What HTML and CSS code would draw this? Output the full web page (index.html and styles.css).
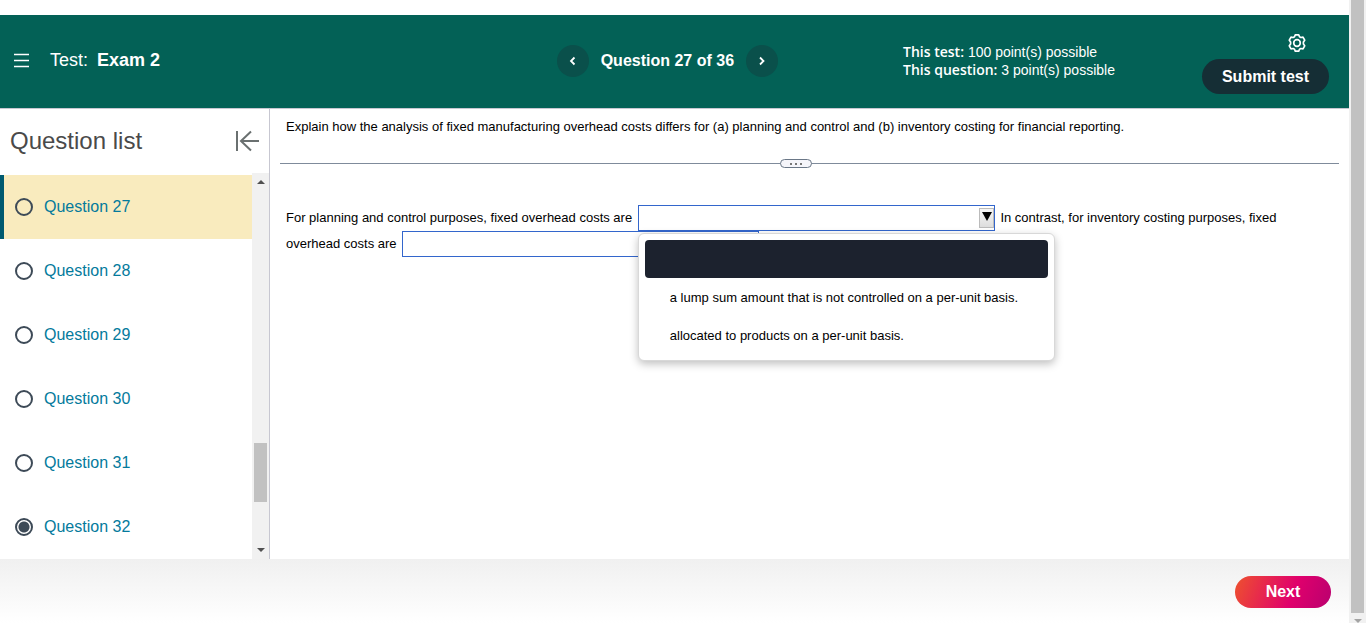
FILE: index.html
```html
<!DOCTYPE html>
<html lang="en">

<head>
    <meta charset="UTF-8">
    <meta name="viewport" content="width=device-width, initial-scale=1.0">
    <title>Exam 2</title>
    <link rel="stylesheet" href="styles.css">
</head>

<body>
    <div class="page">
        <header class="header">
            <div class="header-left">
                <button type="button" class="icon-btn" aria-label="Menu">
                    <svg width="16" height="16" viewBox="0 0 16 16" stroke="#fff" stroke-width="1.6">
                        <path d="M0 1.500h15M0 7.500h15M0 13.500h15" />
                    </svg>
                </button>
                <h1 class="test-name"><span>Test:</span> Exam 2</h1>
            </div>
            <nav class="question-nav">
                <button type="button" class="round-btn" aria-label="Previous question">
                    <svg width="8" height="10" viewBox="0 0 8 10" fill="none" stroke="#fff" stroke-width="1.8">
                        <path d="M5.5 1.5L2 5l3.500 3.500" />
                    </svg>
                </button>
                <h2>Question 27 of 36</h2>
                <button type="button" class="round-btn" aria-label="Next question">
                    <svg width="8" height="10" viewBox="0 0 8 10" fill="none" stroke="#fff" stroke-width="1.8">
                        <path d="M2 1.500L5.500 5 2 8.500" />
                    </svg>
                </button>
            </nav>
            <div class="header-right">
                <div class="points">
                    <p><b>This test:</b> 100 point(s) possible</p>
                    <p><b>This question:</b> 3 point(s) possible</p>
                </div>
                <div class="actions">
                    <button type="button" class="icon-btn settings" aria-label="Settings">
                        <svg width="20" height="20" viewBox="0 0 20 20" fill="none" stroke="#fff" stroke-width="1.7" stroke-linejoin="round">
                            <path d="M8.300 1.800h3.400l.8 2 1.300.7 2.200-.3 1.700 3-1.300 1.700v2.200l1.300 1.700-1.700 3-2.200-.3-1.300.7-.8 2H8.300l-.8-2-1.300-.7-2.200.3-1.700-3 1.300-1.700V8.900L2.300 7.200l1.700-3 2.200.3 1.300-.7z" />
                            <circle cx="10" cy="10" r="3.300" />
                        </svg>
                    </button>
                    <button type="button" class="submit">Submit test</button>
                </div>
            </div>
        </header>

        <div class="content">
            <aside class="sidebar">
                <div class="sidebar-title">
                    <h2>Question list</h2>
                    <button type="button" class="icon-btn" aria-label="Collapse list">
                        <svg width="24" height="22" viewBox="0 0 24 22" fill="none" stroke="#6a7070" stroke-width="2">
                            <path d="M2 1v20M24 11H6M16 1.500L6 11l10 9.500" />
                        </svg>
                    </button>
                </div>
                <div class="list-wrap">
                    <ul class="list">
                        <li class="current"><input type="radio" name="q27" id="q27"><label for="q27">Question 27</label></li>
                        <li><input type="radio" name="q28" id="q28"><label for="q28">Question 28</label></li>
                        <li><input type="radio" name="q29" id="q29"><label for="q29">Question 29</label></li>
                        <li><input type="radio" name="q30" id="q30"><label for="q30">Question 30</label></li>
                        <li><input type="radio" name="q31" id="q31"><label for="q31">Question 31</label></li>
                        <li><input type="radio" name="q32" id="q32" checked><label for="q32">Question 32</label></li>
                    </ul>
                    <div class="scrollbar">
                        <span class="arrow-up"></span>
                        <span class="thumb"></span>
                        <span class="arrow-down"></span>
                    </div>
                </div>
            </aside>

            <main class="question">
                <p class="prompt">Explain how the analysis of fixed manufacturing overhead costs differs for (a) planning and control and (b) inventory costing for financial reporting.</p>
                <div class="divider">
                    <button type="button" class="handle" aria-label="Resize"><i></i><i></i><i></i></button>
                </div>
                <div class="answer">
                    <label for="planning">For planning and control purposes, fixed overhead costs are</label>
                    <span class="dropdown">
                        <select id="planning">
                            <option></option>
                            <option>a lump sum amount that is not controlled on a per-unit basis.</option>
                            <option>allocated to products on a per-unit basis.</option>
                        </select>
                        <span class="dropdown-arrow"></span>
                        <ul class="menu">
                            <li class="active"></li>
                            <li>a lump sum amount that is not controlled on a per-unit basis.</li>
                            <li>allocated to products on a per-unit basis.</li>
                        </ul>
                    </span>
                    <span>In contrast, for inventory costing purposes, fixed</span>
                    <label for="costing">overhead costs are</label>
                    <span class="dropdown">
                        <select id="costing">
                            <option></option>
                        </select>
                    </span>
                </div>
            </main>
        </div>

        <footer class="footer">
            <button type="button" class="next">Next</button>
        </footer>
    </div>
    <div class="page-scrollbar">
        <span class="thumb"></span>
        <span class="arrow-down"></span>
    </div>
</body>

</html>
```

FILE: styles.css
```css
* {
    padding: 0;
    margin: 0;
    box-sizing: border-box;
}

body {
    display: flex;
    height: 100vh;
    overflow: hidden;
    font-family: "Liberation Sans", Arial, sans-serif;
    font-size: 13px;
    color: #000;
    background-color: #fff;
}

button {
    border: none;
    background: none;
    font-family: inherit;
    cursor: pointer;
}

svg {
    display: block;
}

ul {
    list-style: none;
}

.page {
    flex: 1;
    display: flex;
    flex-direction: column;
    padding-top: 15px;
}

/* header */
.header {
    display: grid;
    grid-template-columns: 39fr auto 40fr;
    height: 94px;
    padding-bottom: 2px;
    border-bottom: 1px solid #c7c7d1;
    background-color: #036156;
    color: #fff;
}

.header-left {
    display: flex;
    align-items: center;
    gap: 20px;
    padding-left: 14px;
}

.test-name {
    font-size: 18px;
}

.test-name span {
    margin-right: 4px;
    font-weight: normal;
}

.question-nav {
    display: flex;
    align-items: center;
    gap: 12px;
}

.question-nav h2 {
    font-size: 16px;
}

.round-btn {
    display: flex;
    align-items: center;
    justify-content: center;
    width: 32px;
    height: 32px;
    border-radius: 50%;
    background-color: #0a504b;
}

.header-right {
    display: flex;
    align-items: center;
    justify-content: space-between;
    padding: 0 20px 0 125px;
}

.points {
    font-size: 14px;
    line-height: 18px;
}

.points b {
    font-family: "Open Sans", sans-serif;
    font-weight: 600;
}

.actions {
    display: flex;
    flex-direction: column;
    align-items: flex-end;
    gap: 6px;
    padding-top: 6px;
}

.settings {
    margin-right: 22px;
}

.submit {
    width: 127px;
    height: 35px;
    border-radius: 18px;
    background-color: #152e35;
    color: #fff;
    font-size: 16px;
    font-weight: bold;
}

.content {
    flex: 1;
    display: flex;
    min-height: 0;
}

/* question list */
.sidebar {
    display: flex;
    flex-direction: column;
    width: 270px;
    border-right: 1px solid #c7c7d1;
}

.sidebar-title {
    display: flex;
    align-items: center;
    justify-content: space-between;
    height: 64px;
    padding: 0 10px;
}

.sidebar-title h2 {
    font-size: 24px;
    font-weight: normal;
    color: #4a4a4a;
}

.list-wrap {
    flex: 1;
    display: flex;
    min-height: 0;
}

.list {
    flex: 1;
    padding-top: 2px;
    overflow: hidden;
}

.list li {
    display: flex;
    align-items: center;
    gap: 11px;
    height: 64px;
    padding-left: 15px;
    font-size: 16px;
    color: #047a9c;
}

.list .current {
    padding-left: 11px;
    border-left: 4px solid #005a70;
    background-color: #f9ebbe;
}

.list input {
    appearance: none;
    width: 18px;
    height: 18px;
    border: 2px solid #3d4a57;
    border-radius: 50%;
}

.list input:checked {
    background-image: radial-gradient(#3d4a57 5px, transparent 6px);
}

.scrollbar {
    display: flex;
    flex-direction: column;
    align-items: center;
    width: 17px;
    padding: 7px 0;
    background-color: #f1f1f1;
}

.scrollbar .thumb {
    width: 13px;
    height: 59px;
    margin: auto 0 46px;
    background-color: #c1c1c1;
}

.arrow-up {
    border: 4px solid transparent;
    border-top: none;
    border-bottom-color: #505050;
}

.arrow-down {
    border: 4px solid transparent;
    border-bottom: none;
    border-top-color: #505050;
}

/* question */
.question {
    flex: 1;
    padding: 10px;
}

.prompt {
    padding: 0 6px;
    line-height: 16px;
}

.divider {
    display: flex;
    justify-content: center;
    align-items: center;
    height: 1px;
    margin-top: 28px;
    background-color: #7f8b9b;
}

.handle {
    display: flex;
    align-items: center;
    justify-content: center;
    gap: 3px;
    width: 32px;
    height: 9px;
    margin-right: 27px;
    border: 1px solid #6a7787;
    border-radius: 5px;
    background-color: #f5f5fa;
}

.handle i {
    width: 2px;
    height: 2px;
    background-color: #777;
}

.answer {
    padding: 41px 6px 0;
    line-height: 26px;
}

.dropdown {
    position: relative;
    display: inline-block;
    width: 357px;
    height: 26px;
    margin: 0 2px;
    vertical-align: top;
}

.dropdown select {
    display: block;
    appearance: none;
    width: 100%;
    height: 100%;
    border: 1px solid #3366cc;
    background-color: #fff;
}

.dropdown-arrow {
    position: absolute;
    top: 3px;
    right: 1px;
    width: 15px;
    height: 20px;
    border: 1px solid #bbb;
    background: linear-gradient(#f6f6f6, #ddd);
    pointer-events: none;
}

.dropdown-arrow::before {
    content: "";
    display: block;
    margin: 3px auto 0 2px;
    width: 0;
    border: 5px solid transparent;
    border-top: 9px solid #000;
    border-bottom: none;
}

.menu {
    position: absolute;
    top: 28px;
    left: 0;
    z-index: 1;
    width: 417px;
    padding: 6px;
    border: 1px solid #d8d8d8;
    border-radius: 6px;
    background-color: #fff;
    box-shadow: 0 3px 8px rgba(0, 0, 0, 0.25);
}

.menu li {
    height: 38px;
    padding-left: 25px;
    border-radius: 4px;
    line-height: 40px;
}

.menu .active {
    background-color: #1c222e;
}

/* footer */
.footer {
    display: flex;
    align-items: center;
    justify-content: flex-end;
    height: 64px;
    padding: 2px 18px 0 0;
    background: linear-gradient(#f0f0f0, #fff);
}

.next {
    width: 96px;
    height: 32px;
    border-radius: 16px;
    background: linear-gradient(110deg, #ee512e, #e0006c 60%, #b9006f);
    color: #fff;
    font-size: 16px;
    font-weight: bold;
}

.page-scrollbar {
    display: flex;
    flex-direction: column;
    align-items: center;
    width: 17px;
    background-color: #f1f1f1;
}

.page-scrollbar .thumb {
    flex: 1;
    width: 13px;
    margin-bottom: 6px;
    background-color: #c1c1c1;
}

.page-scrollbar .arrow-down {
    border-top-color: #a3a3a3;
}
```
